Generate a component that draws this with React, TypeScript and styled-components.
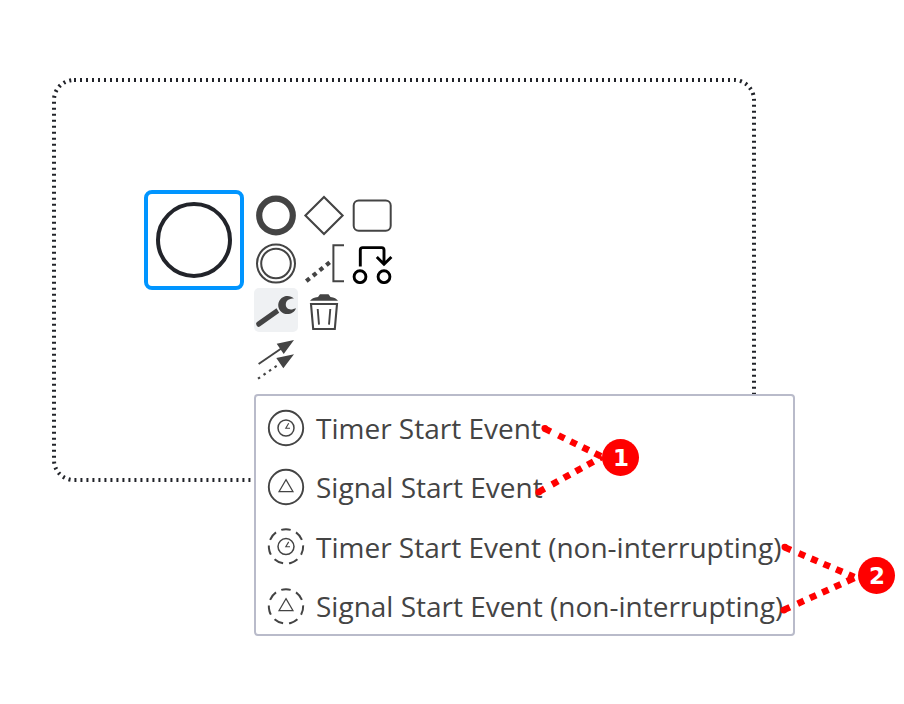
import React from "react";
import styled, { createGlobalStyle } from "styled-components";

const Global = createGlobalStyle`
  body { margin: 0; background: #fff; }
`;

const Canvas = styled.main`
  position: relative;
  width: 904px;
  height: 704px;
  overflow: hidden;
  background: #fff;
`;

const SubProcess = styled.svg`
  position: absolute;
  left: 52px;
  top: 78px;
  width: 704px;
  height: 404px;
`;

const StartEvent = styled.div`
  position: absolute;
  left: 144px;
  top: 190px;
  box-sizing: border-box;
  width: 100px;
  height: 100px;
  padding: 8px;
  border: 4px solid #0095ff;
  border-radius: 8px;
`;

const EventCircle = styled.div`
  box-sizing: border-box;
  width: 76px;
  height: 76px;
  border: 4px solid #22242a;
  border-radius: 50%;
`;

const ContextPad = styled.div`
  position: absolute;
  left: 254px;
  top: 192px;
  display: grid;
  grid-template-columns: repeat(3, 44px);
  grid-auto-rows: 44px;
  gap: 4px;
`;

const PadEntry = styled.div<{ $active?: boolean; $first?: boolean }>`
  grid-column: ${(p) => (p.$first ? 1 : "auto")};
  border-radius: 5px;
  background: ${(p) => (p.$active ? "#eff1f3" : "transparent")};
`;

const PadIcon = styled.svg`
  display: block;
  width: 44px;
  height: 44px;
  fill: none;
  stroke: #444;
  stroke-width: 2;
`;

const PopupMenu = styled.ul`
  position: absolute;
  left: 254px;
  top: 394px;
  box-sizing: border-box;
  width: 541px;
  height: 242px;
  margin: 0;
  padding: 2px 0 0 10px;
  list-style: none;
  border: 2px solid #b9bbca;
  border-radius: 4px;
  background: #fff;
`;

const MenuItem = styled.li`
  display: flex;
  align-items: center;
  gap: 10px;
  height: 59.33px;
  color: #444;
  font: 28px/38px "Open Sans", sans-serif;
  white-space: nowrap;
`;

const MenuLabel = styled.span`
  margin-top: 0.7px;
`;

const MenuIcon = styled.svg`
  width: 40px;
  height: 40px;
  fill: none;
  stroke: #444;
`;

const Leaders = styled.svg`
  position: absolute;
  inset: 0;
  width: 904px;
  height: 704px;
`;

const LeaderLine = styled.path`
  fill: none;
  stroke: #f00;
  stroke-width: 6.6;
  stroke-dasharray: 7.5 8.6 6.8 6.7 6.8 6.7 6.8 6.7 6.8 6.7 9;
`;

const Callout = styled.div<{ $x: number; $y: number }>`
  position: absolute;
  left: ${(p) => p.$x}px;
  top: ${(p) => p.$y}px;
  box-sizing: border-box;
  width: 37px;
  height: 37px;
  border-radius: 50%;
  background: #f00;
  color: #fff;
  font: bold 23px/38px "DejaVu Sans", sans-serif;
  text-align: center;
`;

const items = [
  { label: "Timer Start Event", timer: true, dashed: false },
  { label: "Signal Start Event", timer: false, dashed: false },
  { label: "Timer Start Event (non-interrupting)", timer: true, dashed: true },
  { label: "Signal Start Event (non-interrupting)", timer: false, dashed: true },
];

const leaders = [
  { x: 544, y: 428.3, endX: 602, endY: 456.8 },
  { x: 538, y: 492.3, endX: 602, endY: 456.8 },
  { x: 784, y: 547, endX: 854.3, endY: 577 },
  { x: 783, y: 610.3, endX: 854.3, endY: 578 },
];

function EventIcon({ timer, dashed }: { timer: boolean; dashed: boolean }) {
  return (
    <MenuIcon viewBox="0 0 40 40">
      {dashed ? (
        <circle
          cx="20"
          cy="20.4"
          r="17.2"
          strokeWidth="2"
          pathLength="70"
          strokeDasharray="6.2 3.8"
          transform="rotate(-106 20 20.4)"
        />
      ) : (
        <circle cx="20" cy="20" r="17.2" strokeWidth="1.9" />
      )}
      {timer ? (
        <g transform={dashed ? "translate(0 .6)" : undefined}>
          <circle cx="20" cy="20" r="8" strokeWidth="1.5" />
          <path d="M22.7 15.3 19.8 20.2H24" strokeWidth="1.1" />
        </g>
      ) : (
        <path d="M20 12.6 27 24.7H13Z" strokeWidth="1.2" />
      )}
    </MenuIcon>
  );
}

export default function App() {
  return (
    <Canvas>
      <Global />
      <SubProcess viewBox="52 78 704 404">
        <rect x="54" y="80" width="700" height="400" rx="20" fill="none" stroke="#22242a" strokeWidth="4" strokeDasharray="2 4" />
      </SubProcess>
      <StartEvent>
        <EventCircle />
      </StartEvent>
      <ContextPad>
        <PadEntry>
          <PadIcon><circle cx="22" cy="23.5" r="16.8" strokeWidth="6.2" /></PadIcon>
        </PadEntry>
        <PadEntry>
          <PadIcon><path d="M22 5 40.6 23.5 22 42 3.4 23.5Z" strokeWidth="2.1" /></PadIcon>
        </PadEntry>
        <PadEntry>
          <PadIcon><rect x="3.7" y="8.6" width="37" height="30.2" rx="5" /></PadIcon>
        </PadEntry>
        <PadEntry>
          <PadIcon><circle cx="22" cy="23.5" r="19" /><circle cx="22" cy="23.5" r="14.8" /></PadIcon>
        </PadEntry>
        <PadEntry>
          <PadIcon>
            <path d="M42 5.3H31.4V41.2H42" />
            <path d="M4.3 41.1 28 22.1" strokeWidth="4.2" strokeDasharray="4.3 4.25" />
          </PadIcon>
        </PadEntry>
        <PadEntry>
          <PadIcon>
            <g stroke="#000" strokeWidth="2.9">
              <circle cx="10" cy="36.7" r="5.9" />
              <circle cx="34" cy="36.7" r="5.9" />
              <path d="M10.3 26.4V10Q10.3 7.6 12.7 7.6H31.6Q34 7.6 34 10V24M26.8 17 34 24.2 41.4 17" />
            </g>
          </PadIcon>
        </PadEntry>
        <PadEntry $active>
          <PadIcon>
            <g fill="#444" stroke="none">
              <path d="M22.5 20.3 25.2 24.8 5.8 38.6Q4.2 39.6 3 37.9L2.4 36.9Q1.4 35.2 3 34.1Z" />
              <path d="M39.9 10.6C37 7.4 31.3 7 27.6 10C23.5 13.5 23.1 19.4 26.6 23.2C31 28 40 26.6 42 20.3L39.3 20.9C35.6 22.5 31.5 20.2 31.8 16.2C32.1 12.3 35.8 10.6 39.9 10.6Z" />
            </g>
          </PadIcon>
        </PadEntry>
        <PadEntry>
          <PadIcon>
            <path d="M8 12.8Q10 9.6 16 8.9L18 6.3H26.5L28.5 8.9Q34 9.6 36 12.8Z" fill="#444" stroke="none" />
            <path d="M9 16H35L32.8 41H11.2Z" strokeWidth="2.1" />
            <path d="M15.7 21 17 36.6M28.3 21 27 36.6" strokeWidth="1.9" />
          </PadIcon>
        </PadEntry>
        <PadEntry $first>
          <PadIcon>
            <path d="M4.6 28 28 12" />
            <path d="M4 42.7 24 29" strokeDasharray="2.5 4.2" strokeWidth="2.2" />
            <path d="M40 4 22.7 7.7 29.7 17.9ZM40 18.3 22.3 22 29.3 32.2Z" fill="#444" stroke="none" />
          </PadIcon>
        </PadEntry>
      </ContextPad>
      <PopupMenu>
        {items.map((item) => (
          <MenuItem key={item.label}>
            <EventIcon timer={item.timer} dashed={item.dashed} />
            <MenuLabel>{item.label}</MenuLabel>
          </MenuItem>
        ))}
      </PopupMenu>
      <Leaders viewBox="0 0 904 704">
        {leaders.map((l) => (
          <g key={l.y}>
            <circle cx={l.x + 0.8} cy={l.y} r="3.3" fill="#f00" />
            <LeaderLine d={`M${l.x} ${l.y} ${l.endX} ${l.endY}`} />
          </g>
        ))}
      </Leaders>
      <Callout $x={602.4} $y={438.5}>1</Callout>
      <Callout $x={858.4} $y={556.5}>2</Callout>
    </Canvas>
  );
}
